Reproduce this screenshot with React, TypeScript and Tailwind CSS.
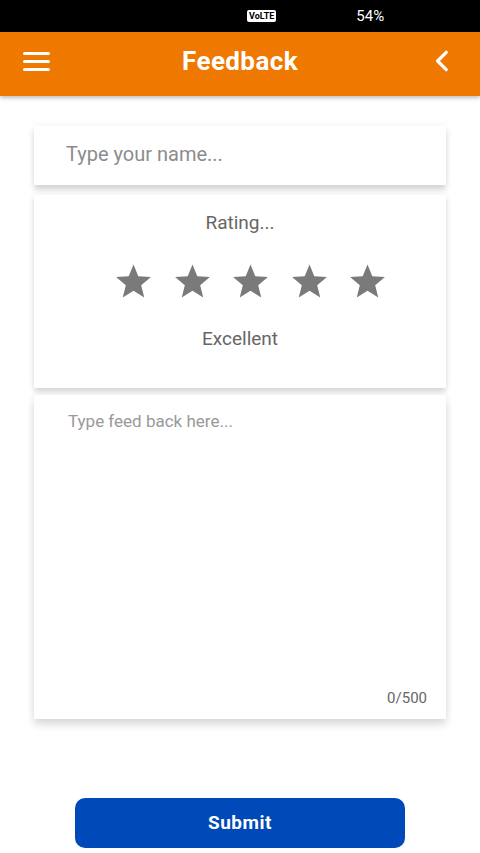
import { useState } from "react";

const Star = () => (
  <svg viewBox="0 0 24 24" className="h-[41px] w-[41px]" fill="#7a7a7a">
    <path d="M12 2.6l2.8 6.9 7.4.5-5.7 4.8 1.8 7.2L12 18l-6.3 4 1.8-7.2L1.8 10l7.4-.5z" />
  </svg>
);

export default function App() {
  const [name, setName] = useState("");
  const [text, setText] = useState("");

  return (
    <div className="flex h-[853px] w-[480px] flex-col overflow-hidden bg-white font-['Roboto',sans-serif]">
      {/* status bar */}
      <div className="flex h-[32px] items-center bg-black text-white">
        <span className="ml-[247px] rounded-[2px] bg-white px-[2px] text-[9px] font-bold leading-[12px] text-black">
          VoLTE
        </span>
        <span className="ml-[80px] text-[15px]">54%</span>
      </div>

      {/* header */}
      <div className="relative z-10 flex h-[64px] items-center bg-[#ef7800] px-[23px] pb-[6px] shadow-[0_2px_4px_rgba(0,0,0,0.25)]">
        <div className="flex w-[27px] flex-col gap-[5px]">
          <span className="h-[3px] rounded bg-white" />
          <span className="h-[3px] rounded bg-white" />
          <span className="h-[3px] rounded bg-white" />
        </div>
        <h1 className="flex-1 text-center text-[26px] font-bold tracking-[0.4px] text-white">
          Feedback
        </h1>
        <svg viewBox="0 0 24 24" className="mr-[1px] h-[26px] w-[26px]" fill="none" stroke="white" strokeWidth="3" strokeLinecap="round" strokeLinejoin="round">
          <path d="M15 4l-8 8 8 8" />
        </svg>
      </div>

      <div className="flex flex-col gap-[10px] px-[34px] pt-[30px]">
        <div className="flex h-[59px] items-center bg-white pb-[3px] shadow-[0_5px_5px_rgba(0,0,0,0.14),0_0_8px_rgba(0,0,0,0.06)]">
          <input
            value={name}
            onChange={(e) => setName(e.target.value)}
            placeholder="Type your name..."
            className="w-full bg-transparent pl-[32px] text-[20px] text-[#555] outline-none placeholder:text-[#8c8c8c]"
          />
        </div>

        <div className="flex h-[193px] flex-col items-center bg-white pt-[14px] shadow-[0_4px_5px_rgba(0,0,0,0.13),0_0_8px_rgba(0,0,0,0.06)]">
          <p className="text-[19px] text-[#666]">Rating...</p>
          <div className="ml-[21px] mt-[22px] flex gap-[17.5px]">
            <Star />
            <Star />
            <Star />
            <Star />
            <Star />
          </div>
          <p className="mt-[24px] text-[19px] text-[#666]">Excellent</p>
        </div>

        <div className="-mt-[3px] flex h-[324px] flex-col bg-white px-[34px] pb-[10px] pt-[14px] shadow-[0_6px_8px_rgba(0,0,0,0.13),0_0_8px_rgba(0,0,0,0.06)]">
          <textarea
            value={text}
            onChange={(e) => setText(e.target.value)}
            maxLength={500}
            placeholder="Type feed back here..."
            className="flex-1 resize-none bg-transparent text-[17px] text-[#555] outline-none placeholder:text-[#999]"
          />
          <p className="mr-[-15px] text-right text-[15px] text-[#666]">{text.length}/500</p>
        </div>
      </div>

      <button className="mx-auto mt-[79px] h-[50px] w-[330px] rounded-[10px] bg-[#0049b8] text-[19px] font-bold tracking-[0.5px] text-white">
        Submit
      </button>
    </div>
  );
}
